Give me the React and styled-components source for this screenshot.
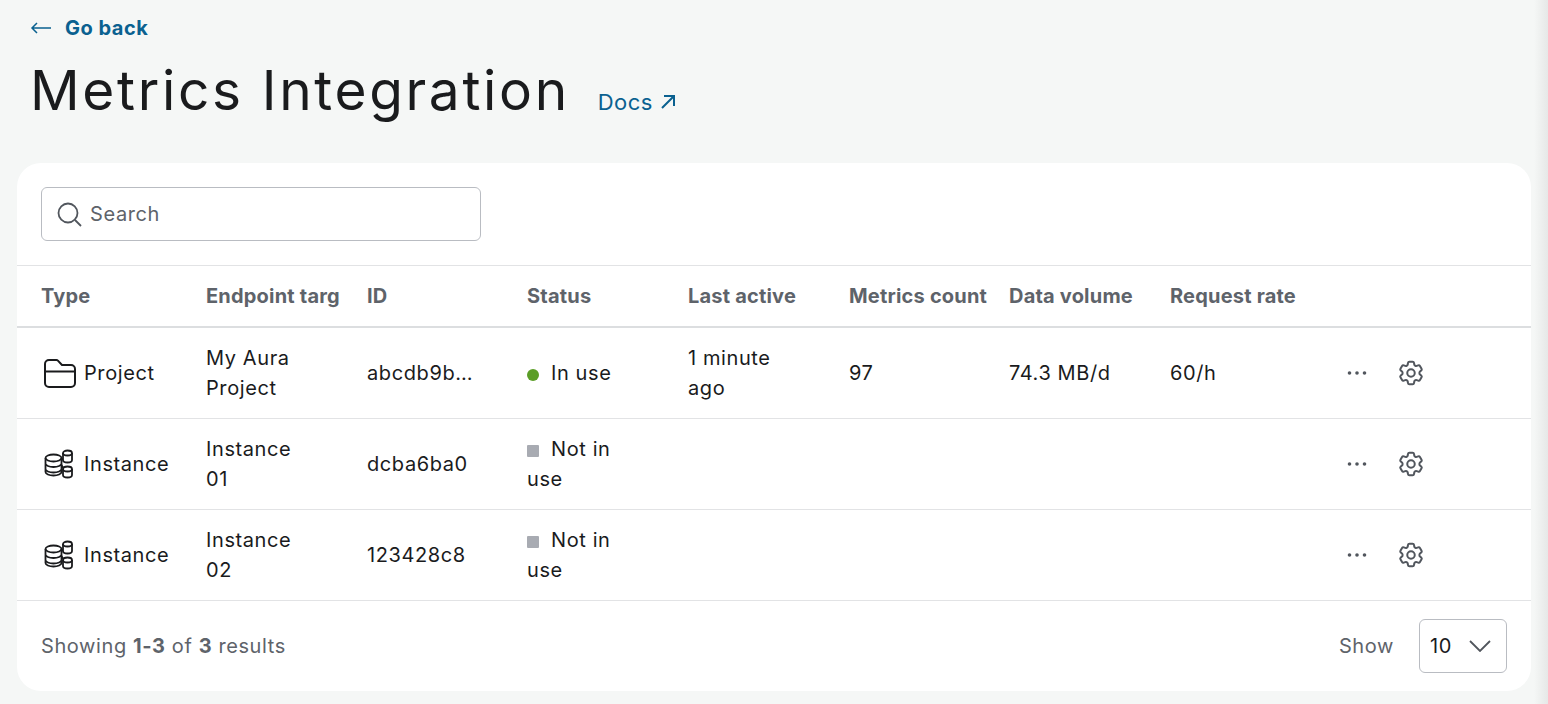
import React from "react";
import styled, { createGlobalStyle } from "styled-components";
import { HiOutlineCog6Tooth } from "react-icons/hi2";

const GlobalStyle = createGlobalStyle`
  html, body {
    margin: 0;
    padding: 0;
    height: 704px;
    overflow: hidden;
    background: #f5f7f6;
  }
  body {
    font-family: "Inter", "Liberation Sans", sans-serif;
    color: #1a1b1d;
    letter-spacing: 0.6px;
  }
`;

const Page = styled.div`
  position: relative;
  box-sizing: border-box;
  height: 704px;
  padding: 13px 17px 0 17px;
`;

const RightShade = styled.div`
  position: absolute;
  top: 0;
  right: 0;
  bottom: 0;
  width: 14px;
  background: linear-gradient(to right, #f5f7f6, #e6e8e7);
`;

const BackLink = styled.a`
  display: flex;
  align-items: center;
  gap: 13px;
  height: 30px;
  padding-left: 13px;
  color: #0a6190;
  font-size: 20px;
  font-weight: 700;
  letter-spacing: 0.5px;
`;

const TitleRow = styled.div`
  display: flex;
  align-items: baseline;
  gap: 28px;
  height: 62px;
  margin-top: 16px;
  padding-left: 13px;
`;

const Title = styled.h1`
  margin: 0;
  font-size: 55px;
  line-height: 62px;
  font-weight: 400;
  letter-spacing: 2.65px;
  color: #1a1b1d;
`;

const DocsLink = styled.a`
  display: flex;
  align-items: center;
  gap: 7px;
  color: #0a6190;
  font-size: 22px;
  letter-spacing: 0.4px;
`;

const Card = styled.section`
  display: flex;
  flex-direction: column;
  width: 1514px;
  height: 528px;
  margin-top: 42px;
  background: #fff;
  border-radius: 24px;
  overflow: hidden;
`;

const Toolbar = styled.div`
  box-sizing: border-box;
  height: 103px;
  padding: 24px;
  border-bottom: 1px solid #e2e3e5;
`;

const SearchBox = styled.div`
  box-sizing: border-box;
  display: flex;
  align-items: center;
  gap: 7px;
  width: 440px;
  height: 54px;
  padding: 0 14px;
  border: 1px solid #b9bcc2;
  border-radius: 6px;
  color: #5e636a;
  font-size: 20px;
`;

const Row = styled.div`
  display: grid;
  grid-template-columns: 173px 161px 160px 161px 161px 160px 161px 160px 1fr;
  align-items: center;
  box-sizing: border-box;
  height: ${(p) => (p.$head ? "62px" : "91px")};
  border-bottom: ${(p) => (p.$head ? "2px solid #dcdee0" : "1px solid #e2e3e5")};
`;

const HeadCell = styled.div`
  padding-left: ${(p) => (p.$first ? "24px" : "16px")};
  color: #5e636a;
  font-size: 20px;
  font-weight: 700;
  letter-spacing: 0.2px;
  white-space: nowrap;
`;

const Cell = styled.div`
  box-sizing: border-box;
  padding: 0 0 0 16px;
  max-width: 124px;
  font-size: 20px;
  line-height: 30px;
  color: #1a1b1d;
`;

const TypeCell = styled(Cell)`
  display: flex;
  align-items: center;
  gap: 8px;
  max-width: none;
  padding: 0 0 0 25px;
`;

const TypeIcon = styled.span`
  display: flex;
  justify-content: center;
  width: 34px;
`;

const Dot = styled.span`
  display: inline-block;
  width: 12px;
  height: 12px;
  margin-right: 12px;
  vertical-align: -0.5px;
  background: ${(p) => (p.$active ? "#5b9e27" : "#a8abb2")};
  border-radius: ${(p) => (p.$active ? "50%" : "1px")};
`;

const Actions = styled.div`
  display: flex;
  align-items: center;
  gap: 29px;
  padding-left: 33px;
  color: #51565d;
`;

const Footer = styled.div`
  display: flex;
  align-items: center;
  justify-content: space-between;
  flex: 1;
  padding: 0 24px;
  color: #5e636a;
  font-size: 20px;
`;

const PageSize = styled.div`
  display: flex;
  align-items: center;
  gap: 25px;
`;

const SizeSelect = styled.div`
  box-sizing: border-box;
  display: flex;
  align-items: center;
  justify-content: space-between;
  width: 88px;
  height: 54px;
  padding: 0 15px 0 10px;
  border: 1px solid #b9bcc2;
  border-radius: 6px;
  color: #1a1b1d;
`;

const FolderIcon = () => (
  <svg width="33" height="29" viewBox="0 0 33 29" fill="none" stroke="#1a1b1d" strokeWidth="2" strokeLinejoin="round">
    <path d="M2 12V5a4 4 0 0 1 4-4h7.500a2 2 0 0 1 1.400.600L19 6h9a4 4 0 0 1 4 4v14a4 4 0 0 1-4 4H6a4 4 0 0 1-4-4z" />
    <path d="M2 12.500h30" />
  </svg>
);

const InstanceIcon = () => (
  <svg width="30" height="30" viewBox="0 0 30 30" fill="none" stroke="#1a1b1d" strokeWidth="1.800">
    <ellipse cx="9.500" cy="9" rx="8" ry="3.500" />
    <path d="M1.500 9v14c0 2 3.600 3.500 8 3.500s8-1.500 8-3.500V9M1.500 14.500c0 2 3.600 3.500 8 3.500s8-1.500 8-3.500M1.500 20c0 2 3.600 3.500 8 3.500s8-1.500 8-3.500" />
    <ellipse cx="23.500" cy="4" rx="4.500" ry="2.500" />
    <path d="M19 4v7c0 1.400 2 2.500 4.500 2.500s4.500-1.100 4.500-2.500V4" />
    <ellipse cx="23.500" cy="20" rx="4.500" ry="2.500" />
    <path d="M19 20v6c0 1.400 2 2.500 4.500 2.500s4.500-1.100 4.500-2.500v-6" />
    <path d="M17.500 10.500l1.500-.500M17.500 16l1.500 3" />
  </svg>
);

const DotsIcon = () => (
  <svg width="20" height="6" viewBox="0 0 20 6" fill="#51565d">
    <circle cx="2.500" cy="3" r="1.800" />
    <circle cx="10" cy="3" r="1.800" />
    <circle cx="17.500" cy="3" r="1.800" />
  </svg>
);

const rows = [
  { icon: <FolderIcon />, type: "Project", target: "My Aura Project", id: "abcdb9b…", active: true, status: "In use", last: "1 minute ago", count: "97", volume: "74.3 MB/d", rate: "60/h" },
  { icon: <InstanceIcon />, type: "Instance", target: "Instance 01", id: "dcba6ba0", status: "Not in use" },
  { icon: <InstanceIcon />, type: "Instance", target: "Instance 02", id: "123428c8", status: "Not in use" },
];

const columns = ["Endpoint targ", "ID", "Status", "Last active", "Metrics count", "Data volume", "Request rate"];

export default function App() {
  return (
    <Page>
      <GlobalStyle />
      <RightShade />
      <BackLink>
        <svg width="22" height="14" viewBox="0 0 22 14" fill="none" stroke="#0a6190" strokeWidth="1.500">
          <path d="M21 7H2M7 2L2 7l5 5" />
        </svg>
        Go back
      </BackLink>
      <TitleRow>
        <Title>Metrics Integration</Title>
        <DocsLink>
          Docs
          <svg width="16" height="16" viewBox="0 0 16 16" fill="none" stroke="#0a6190" strokeWidth="2">
            <path d="M2 14L14 2M4 2h10v10" />
          </svg>
        </DocsLink>
      </TitleRow>
      <Card>
        <Toolbar>
          <SearchBox>
            <svg width="27" height="27" viewBox="0 0 27 27" fill="none" stroke="#51565d" strokeWidth="1.800">
              <circle cx="12" cy="12" r="9.500" />
              <path d="M19 19l6 6" />
            </svg>
            Search
          </SearchBox>
        </Toolbar>
        <Row $head>
          <HeadCell $first>Type</HeadCell>
          {columns.map((c) => (
            <HeadCell key={c}>{c}</HeadCell>
          ))}
          <div />
        </Row>
        {rows.map((r) => (
          <Row key={r.id}>
            <TypeCell>
              <TypeIcon>{r.icon}</TypeIcon>
              {r.type}
            </TypeCell>
            <Cell>{r.target}</Cell>
            <Cell>{r.id}</Cell>
            <Cell>
              <Dot $active={r.active} />
              {r.status}
            </Cell>
            <Cell>{r.last}</Cell>
            <Cell>{r.count}</Cell>
            <Cell>{r.volume}</Cell>
            <Cell>{r.rate}</Cell>
            <Actions>
              <DotsIcon />
              <HiOutlineCog6Tooth size={30} strokeWidth={1.6} />
            </Actions>
          </Row>
        ))}
        <Footer>
          <div>
            Showing <b>1-3</b> of <b>3</b> results
          </div>
          <PageSize>
            Show
            <SizeSelect>
              10
              <svg width="22" height="12" viewBox="0 0 22 12" fill="none" stroke="#51565d" strokeWidth="1.800">
                <path d="M1 1l10 10L21 1" />
              </svg>
            </SizeSelect>
          </PageSize>
        </Footer>
      </Card>
    </Page>
  );
}
